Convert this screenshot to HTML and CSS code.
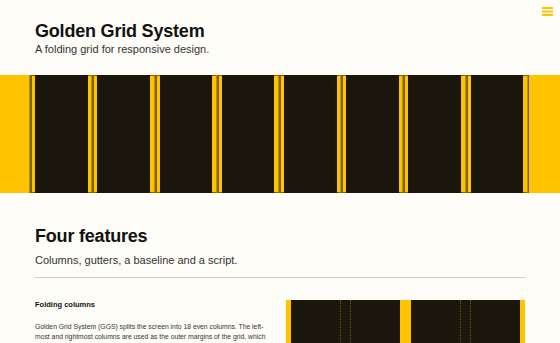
FILE: index.html
```html
<!DOCTYPE html>
<html lang="en">
<head>
  <meta name="viewport" content="width=device-width">
  <title>Golden Grid System</title>
  <link rel="stylesheet" href="styles.css">
</head>
<body>
  <a class="menu" href="#nav" aria-label="Menu">
    <svg width="11" height="9" viewBox="0 0 11 9"><rect y="0" width="11" height="2"/><rect y="3.5" width="11" height="2"/><rect y="7" width="11" height="2"/></svg>
  </a>
  <header class="masthead">
    <h1>Golden Grid System</h1>
    <p class="lede">A folding grid for responsive design.</p>
  </header>

  <div class="band">
    <div class="bar"></div>
    <div class="bar"></div>
    <div class="bar"></div>
    <div class="bar"></div>
    <div class="bar"></div>
    <div class="bar"></div>
    <div class="bar"></div>
    <div class="bar"></div>
    <div class="edge"></div>
  </div>

  <section class="section">
    <h2>Four features</h2>
    <p class="lede">Columns, gutters, a baseline and a script.</p>
    <hr>
    <div class="feature">
      <div class="copy">
        <h3>Folding columns</h3>
        <p>Golden Grid System (GGS) splits the screen into 18 even columns. The left-most and rightmost columns are used as the outer margins of the grid, which leaves 16 columns for use in the design.</p>
      </div>
      <div class="fold">
        <div class="fold-col"><div class="fold-gutter"></div></div>
        <div class="fold-col"><div class="fold-gutter"></div></div>
      </div>
    </div>
  </section>
</body>
</html>
```

FILE: styles.css
```css
html {
  background: #fffdf8;
}

body {
  margin: 0;
  font-family: "Liberation Sans", Arial, sans-serif;
  color: #111;
}

.menu {
  position: absolute;
  top: 7px;
  right: 7px;
  fill: #ffc300;
  line-height: 0;
}

.masthead {
  padding: 20px 35px 0;
  margin-bottom: 19px;
}

h1,
h2 {
  font-size: 18px;
  line-height: 22px;
  margin: 0;
  letter-spacing: -0.2px;
}

.lede {
  font-size: 11px;
  line-height: 14px;
  margin: 0;
  color: #333;
}

.band {
  display: grid;
  grid-template-columns: repeat(18, 1fr);
  height: 118px;
  background: #ffc300;
}

.bar {
  grid-column: span 2;
  padding: 0 5.5px 0 4px;
  background: #1b170c;
  background-clip: content-box;
  box-shadow: -1.5px 0 0 #806200;
}

.bar:first-child {
  grid-column: 2 / span 2;
}

.edge {
  box-shadow: -1.5px 0 0 #806200;
}

.section {
  padding: 32px 35px 0 35px;
}

.section h2 {
  margin-bottom: 6px;
}

hr {
  border: none;
  border-top: 1px solid #cfcdc8;
  margin: 10px 0 0;
}

.feature {
  display: grid;
  grid-template-columns: 1fr 1fr;
  gap: 12px;
  margin-top: 22px;
}

h3 {
  font-size: 7.5px;
  line-height: 10px;
  margin: 0 0 12px;
}

.copy p {
  font-size: 6.8px;
  line-height: 10px;
  margin: 0;
  color: #333;
}

.fold {
  display: flex;
  gap: 10.5px;
  padding: 0 5px;
  height: 130px;
  background: #ffc300;
}

.fold-col {
  flex: 1;
  background: #1b170c;
}

.fold-gutter {
  width: 9px;
  height: 100%;
  margin-left: 49px;
  border-left: 1px dotted #6e5a14;
  border-right: 1px dotted #6e5a14;
}
```
